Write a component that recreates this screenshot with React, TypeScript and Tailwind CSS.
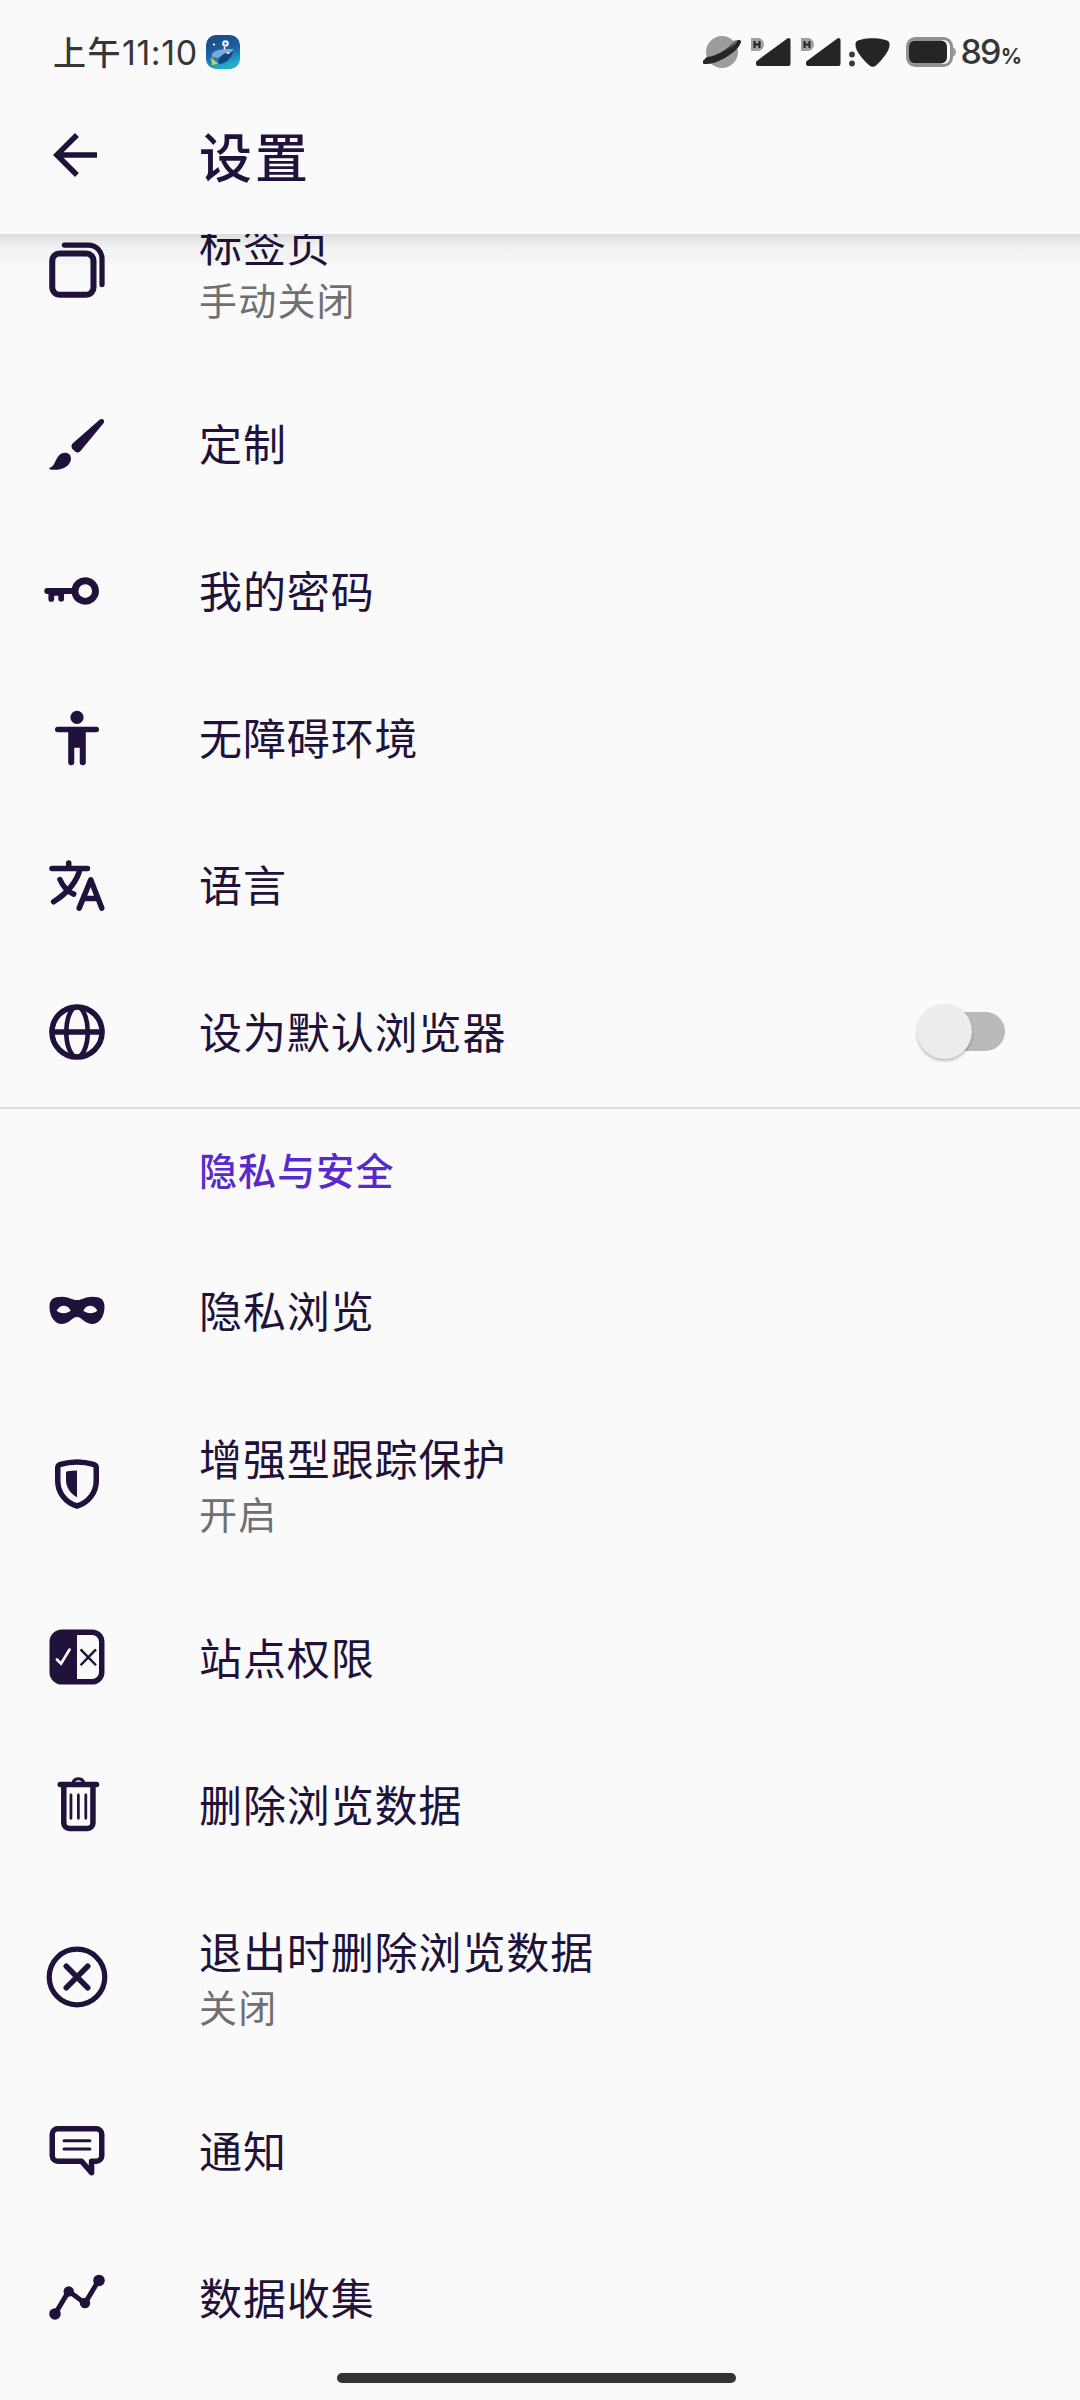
import type { ReactNode } from 'react';

interface SettingItem {
  icon: ReactNode;
  title: string;
  summary?: string;
  toggle?: boolean;
}

function Icon({ children }: { children: ReactNode }) {
  return (
    <svg viewBox="0 0 24 24" className="h-[66px] w-[66px] shrink-0 fill-current" aria-hidden="true">
      {children}
    </svg>
  );
}

function LineIcon({ children }: { children: ReactNode }) {
  return (
    <svg
      viewBox="0 0 24 24"
      className="h-[66px] w-[66px] shrink-0 fill-none stroke-current"
      strokeWidth="2"
      strokeLinecap="round"
      strokeLinejoin="round"
      aria-hidden="true"
    >
      {children}
    </svg>
  );
}

const TabsIcon = () => (
  <LineIcon>
    <rect x="3" y="6" width="15" height="15" rx="2.6" strokeWidth="2.2" />
    <path d="M7.4 2.95H16.2a4.9 4.9 0 0 1 4.9 4.9V17.3" strokeWidth="1.9" />
  </LineIcon>
);

const BrushIcon = () => (
  <Icon>
    <path d="M20.3 3.1q.7-.4 1.3 0 .5.6.1 1.3L13.2 14.6q-.9.9-1.9.1l-1.1-1.1q-.6-.9.1-1.7Z" />
    <path d="M2.1 20.6C3.8 20 4 18.2 4.9 16.9 6.1 15 8.1 14.800 9.300 15.800 10.200 17 9.900 18.600 8.500 19.900 6.800 21.300 4.300 21.600 2.200 21.300Q1.700 21 2.100 20.600Z" />
  </Icon>
);

const KeyIcon = () => (
  <Icon>
    <path
      fillRule="evenodd"
      d="M15 7a5 5 0 1 1-4.9 6.1H7.3v1.7a1 1 0 0 1-2.1 0V13.7H3.7v1.200a1 1 0 0 1-2.100 0V13.100H1.200a1.100 1.100 0 0 1 0-2.200h8.900A5 5 0 0 1 15 7Zm0 2.500a2.500 2.500 0 1 0 0 5 2.500 2.500 0 0 0 0-5Z"
    />
  </Icon>
);

const PersonIcon = () => (
  <Icon>
    <circle cx="12" cy="4.5" r="2.4" />
    <path d="M5 7.9H19a1 1 0 0 1 0 2H15.200V21a.9.9 0 0 1-.9.9h-.400A.9.9 0 0 1 13 21V15.500H11V21a.9.9 0 0 1-.9.9H9.700A.9.9 0 0 1 8.800 21V9.900H5a1 1 0 0 1 0-2Z" />
  </Icon>
);

const LanguageIcon = () => (
  <LineIcon>
    <path d="M9 4v1.8M2.9 6H15.8M13.1 6.2C12 10.5 9.5 14.300 3.500 18.100M5.800 10C7 12.700 8.600 14.500 10.800 15.300" />
    <path d="M12.800 20.400 17 10.100 21 20.400M14.400 16.900H19.500" />
  </LineIcon>
);

const GlobeIcon = () => (
  <LineIcon>
    <circle cx="12" cy="12" r="9.1" />
    <ellipse cx="12" cy="12" rx="3.9" ry="9.1" strokeWidth="1.7" />
    <path d="M3 12H21" />
  </LineIcon>
);

const MaskIcon = () => (
  <Icon>
    <path
      fillRule="evenodd"
      d="M6.5 6.8C9 6.8 10.2 8 12 8 13.8 8 15 6.8 17.5 6.8 20.7 6.8 22 7.8 22 10.5 22 13.8 20.2 16.7 17.4 16.7 14.8 16.7 13.8 14.2 12 14.2 10.2 14.2 9.2 16.7 6.6 16.7 3.800 16.700 2 13.800 2 10.500 2 7.800 3.300 6.800 6.500 6.800ZM4.600 11.800C5.300 10.700 6.100 10.100 7.300 10.100 8.500 10.100 9.300 11 9.700 11.900 8.900 12.500 8.200 12.800 7.200 12.800 6 12.800 5.200 12.400 4.600 11.800ZM19.400 11.800C18.700 10.700 17.900 10.100 16.700 10.100 15.500 10.100 14.700 11 14.300 11.900 15.100 12.500 15.800 12.800 16.800 12.800 18 12.800 18.800 12.400 19.400 11.800Z"
    />
  </Icon>
);

const ShieldIcon = () => (
  <LineIcon>
    <path d="M12 4c2 0 4.4.4 6 .9.6.2 1 .6 1 1.2V10.8C19 15 16.300 18.700 12 20 7.700 18.700 5 15 5 10.800V6.100c0-.600.400-1 1-1.200C7.600 4.400 10 4 12 4Z" />
    <path
      d="M12 7.100V16.800C9.500 15.400 8 13.100 8 10.500V8c0-.300.200-.500.500-.600Q10.200 7.100 12 7.100Z"
      fill="currentColor"
      stroke="none"
    />
  </LineIcon>
);

const PermissionIcon = () => (
  <Icon>
    <path
      fillRule="evenodd"
      d="M6.5 2H17.5A4.5 4.5 0 0 1 22 6.5V17.5A4.5 4.5 0 0 1 17.5 22H6.5A4.5 4.5 0 0 1 2 17.5V6.5A4.5 4.5 0 0 1 6.5 2ZM12 4V20H17.5A2.5 2.5 0 0 0 20 17.5V6.5A2.5 2.500 0 0 0 17.500 4Z"
    />
    <path d="M4.7 12.9 6.2 14.4 9.3 9.3" fill="none" stroke="#fafafb" strokeWidth="1" strokeLinecap="round" />
    <path d="M13.3 9.2 18.9 15M18.900 9.200 13.300 15" fill="none" stroke="currentColor" strokeWidth=".9" />
  </Icon>
);

const TrashIcon = () => (
  <LineIcon>
    <path d="M5.9 4.9H19.1" />
    <path d="M10.4 4.5C10.7 3.3 11.4 2.800 12.500 2.800 13.600 2.800 14.300 3.300 14.600 4.500" strokeWidth="1.1" />
    <path d="M7.2 5.5V18.9a2 2 0 0 0 2 2h6.6a2 2 0 0 0 2-2V5.500" />
    <path d="M9.8 8.7V17.2M12.5 8.7V17.2M15.2 8.7V17.200" strokeWidth="1" />
  </LineIcon>
);

const CloseCircleIcon = () => (
  <LineIcon>
    <circle cx="12" cy="12" r="10.1" strokeWidth="1.9" />
    <path d="M8.1 8.1 15.9 15.9M15.9 8.1 8.1 15.9" />
  </LineIcon>
);

const MessageIcon = () => (
  <LineIcon>
    <path d="M5 3.9H19a2 2 0 0 1 2 2V13.7a2 2 0 0 1-2 2H17.3V19.9L13.6 15.7H5a2 2 0 0 1-2-2V5.9a2 2 0 0 1 2-2Z" />
    <path d="M7.3 8.3H16.7M7.3 11.3H16.7" strokeWidth="1.1" />
  </LineIcon>
);

const ChartIcon = () => (
  <LineIcon>
    <path d="M4 17.8 9 9.5 14.9 13.900 20 5.400" strokeWidth="1.8" />
    <g fill="currentColor" stroke="none">
      <circle cx="4" cy="17.8" r="2.1" />
      <circle cx="9" cy="9.6" r="1.9" />
      <circle cx="14.9" cy="13.8" r="1.9" />
      <circle cx="20" cy="5.6" r="2.1" />
    </g>
  </LineIcon>
);

const generalItems: SettingItem[] = [
  { icon: <TabsIcon />, title: '标签页', summary: '手动关闭' },
  { icon: <BrushIcon />, title: '定制' },
  { icon: <KeyIcon />, title: '我的密码' },
  { icon: <PersonIcon />, title: '无障碍环境' },
  { icon: <LanguageIcon />, title: '语言' },
  { icon: <GlobeIcon />, title: '设为默认浏览器', toggle: true },
];

const privacyItems: SettingItem[] = [
  { icon: <MaskIcon />, title: '隐私浏览' },
  { icon: <ShieldIcon />, title: '增强型跟踪保护', summary: '开启' },
  { icon: <PermissionIcon />, title: '站点权限' },
  { icon: <TrashIcon />, title: '删除浏览数据' },
  { icon: <CloseCircleIcon />, title: '退出时删除浏览数据', summary: '关闭' },
  { icon: <MessageIcon />, title: '通知' },
  { icon: <ChartIcon />, title: '数据收集' },
];

function Toggle() {
  return (
    <div className="relative mr-[75px] ml-auto h-[39px] w-[84px] rounded-full bg-[#bababa]">
      <div className="absolute -top-2 -left-1 h-[55px] w-[55px] rounded-full bg-[#ececec] shadow-[0_2px_3px_rgba(0,0,0,0.25)]" />
    </div>
  );
}

function SettingRow({ item }: { item: SettingItem }) {
  return (
    <li className={`flex items-center pb-[3px] pl-11 ${item.summary ? 'h-[199.5px]' : 'h-[147px]'}`}>
      {item.icon}
      <div className={`ml-[89px] ${item.summary ? '' : 'pb-[3px]'}`}>
        <p className="text-[43px] leading-[58px] tracking-[0.9px]">{item.title}</p>
        {item.summary && (
          <p className="text-[38px] leading-[54px] tracking-[1.2px] text-[#707070]">{item.summary}</p>
        )}
      </div>
      {item.toggle && <Toggle />}
    </li>
  );
}

function Signal({ className }: { className: string }) {
  return (
    <svg viewBox="0 0 42 32" className={`h-8 w-[42px] ${className}`}>
      <path d="M1 2h7a6 6.5 0 0 1 0 13H1Z" fill="#a0a0a0" />
      <path d="M4.500 5v7M9.500 5v7M4.500 8.500h5" stroke="#222" strokeWidth="2" />
      <path
        d="M8 26.500 38.500 4V28H8Z"
        fill="#252525"
        stroke="#252525"
        strokeWidth="4"
        strokeLinejoin="round"
      />
    </svg>
  );
}

function StatusBar() {
  return (
    <div className="flex h-[104px] items-center pl-[53px] text-[#363636]">
      <span className="flex items-baseline text-[33px] leading-none font-medium tracking-[1.5px]">
        上午
        <span className="font-[Inter] text-[34px] font-normal tracking-[0.6px]">11:10</span>
      </span>
      <svg viewBox="0 0 34 34" className="absolute left-[206px] h-[34px] w-[34px]">
        <defs>
          <linearGradient id="sky" x1="0" y1="0" x2="0.3" y2="1">
            <stop offset="0" stopColor="#174a84" />
            <stop offset=".55" stopColor="#1b5fa0" />
            <stop offset="1" stopColor="#20aecb" />
          </linearGradient>
        </defs>
        <rect width="34" height="34" rx="10" fill="url(#sky)" />
        <path d="M12 26C14 20 20 17 27 17C25 24 19 29 13 29Z" fill="#17437f" />
        <path d="M6 19C10 14 16 14 28 14L23 19 19 18 12 23 6 22Z" fill="#7fa9dc" />
        <path d="M5 22 12 29 6 30Z" fill="#c9cf5e" />
        <circle cx="19.500" cy="8.500" r="2.300" fill="#2a70b0" stroke="#fff" strokeWidth="2" />
        <path d="m7 9 2 1M18.500 12v2.500M22 17v2" stroke="#fff" strokeWidth="1.5" />
      </svg>

      <div className="ml-auto flex items-center pr-[58px]">
        <svg viewBox="0 0 38 34" className="h-[34px] w-[38px]">
          <defs>
            <linearGradient id="ring" x1="0.3" y1="0.1" x2="0.65" y2="0.8">
              <stop offset=".2" stopColor="#8a8a8a" />
              <stop offset=".6" stopColor="#262626" />
            </linearGradient>
          </defs>
          <circle cx="19" cy="17" r="16" fill="#9c9c9c" />
          <path
            d="M1 28C0 26 1 24 4 22 14 21 24 15 31 6 34 4 37 5 37 8 36 16 11 30 1 28Z"
            fill="url(#ring)"
          />
          <path d="M1.500 27C10 28 33 17 36 7" fill="none" stroke="#262626" strokeWidth="4" strokeLinecap="round" />
        </svg>
        <Signal className="ml-[9px]" />
        <Signal className="ml-2" />
        <svg viewBox="0 0 42 32" className="ml-[6px] h-8 w-[42px]">
          <circle cx="4" cy="18.500" r="2.900" fill="#3a3a3a" />
          <circle cx="4" cy="27.500" r="2.900" fill="#3a3a3a" />
          <path
            d="M8 6C13 1 36 1 41 6 44 13 34 24 28 29.500Q24.500 32 21.500 29.500C15 24 5 13 8 6Z"
            fill="#252525"
          />
        </svg>
        <svg viewBox="0 0 50 30" className="ml-4 h-[30px] w-[50px]">
          <path d="M46 10q4 1 4 5t-4 5Z" fill="#a0a0a0" />
          <rect x="1.500" y="1.500" width="44" height="27" rx="8" fill="#fafafb" stroke="#909090" strokeWidth="3" />
          <rect x="3" y="3.500" width="38" height="23" rx="6" fill="#252525" />
        </svg>
        <span className="ml-1 flex items-baseline font-[Inter] leading-none">
          <span className="text-[34px] font-medium tracking-[-1.8px]">89</span>
          <span className="ml-px text-[21px] font-bold">%</span>
        </span>
      </div>
    </div>
  );
}

export default function App() {
  return (
    <div className="relative flex h-[2400px] w-[1080px] flex-col overflow-hidden bg-[#fafafb] font-['Noto_Sans_CJK_SC',sans-serif] text-[#20123a]">
      <header className="relative z-10 h-[234px] shrink-0 bg-[#fafafb]">
        <StatusBar />
        <div className="flex h-[102px] items-center pl-[42px]">
          <svg viewBox="0 0 24 24" className="h-[66px] w-[66px] fill-current">
            <path d="M20 11H7.83l5.59-5.59L12 4l-8 8 8 8 1.41-1.41L7.83 13H20Z" />
          </svg>
          <h1 className="ml-[91px] pb-px text-[53px] leading-[66px] font-medium tracking-[3px]">设置</h1>
        </div>
        {/* Elevation shadow over the scrolled list */}
        <div className="absolute top-full left-0 h-[30px] w-full bg-linear-to-b from-black/12 via-black/3 via-45% to-black/2" />
      </header>

      <main className="min-h-0 flex-1 overflow-hidden">
        <ul className="-mt-[62px]">
          {generalItems.map((item) => (
            <SettingRow key={item.title} item={item} />
          ))}
        </ul>
        <section className="border-t-[2px] border-[#dcdcdc]">
          <h2 className="flex h-[130px] items-center pb-[9px] pl-[199px] text-[38px] leading-[54px] font-medium tracking-[1.1px] text-[#592acb]">
            隐私与安全
          </h2>
          <ul>
            {privacyItems.map((item) => (
              <SettingRow key={item.title} item={item} />
            ))}
          </ul>
        </section>
      </main>

      {/* Gesture bar */}
      <div className="absolute bottom-[17px] left-[337px] h-[10px] w-[399px] rounded-full bg-[#333]" />
    </div>
  );
}
